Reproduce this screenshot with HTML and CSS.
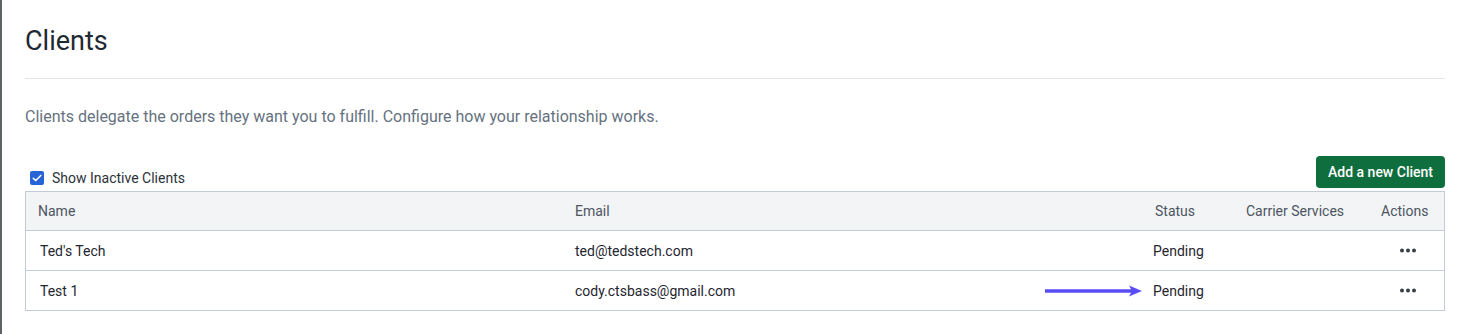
FILE: index.html
```html
<!DOCTYPE html>
<html>
<head>
<meta charset="utf-8">
<link rel="stylesheet" href="styles.css">
</head>
<body>
<div class="page">
  <h1 class="title">Clients</h1>
  <hr class="rule">
  <p class="desc">Clients delegate the orders they want you to fulfill. Configure how your relationship works.</p>
  <div class="toolbar">
    <label class="check">
      <span class="box"><svg width="10" height="8" viewBox="0 0 10 8"><path d="M1.2 4.2 L3.8 6.6 L8.8 1.4" fill="none" stroke="#fff" stroke-width="1.5" stroke-linecap="round" stroke-linejoin="round"/></svg></span>
      <span>Show Inactive Clients</span>
    </label>
    <button class="btn">Add a new Client</button>
  </div>
  <div class="table">
    <div class="row head">
      <div class="cell">Name</div>
      <div class="cell">Email</div>
      <div class="cell">Status</div>
      <div class="cell">Carrier Services</div>
      <div class="cell">Actions</div>
    </div>
    <div class="row">
      <div class="cell name">Ted's Tech</div>
      <div class="cell">ted@tedstech.com</div>
      <div class="cell status">Pending</div>
      <div class="cell"></div>
      <div class="cell actions"><svg width="18" height="5" viewBox="0 0 18 5"><circle cx="3" cy="2.5" r="2" fill="#3a3f46"/><circle cx="9" cy="2.5" r="2" fill="#3a3f46"/><circle cx="15" cy="2.5" r="2" fill="#3a3f46"/></svg></div>
    </div>
    <div class="row last">
      <div class="cell name">Test 1</div>
      <div class="cell">cody.ctsbass@gmail.com</div>
      <div class="cell status">Pending
        <svg class="arrow" width="100" height="12" viewBox="0 0 100 12"><path d="M0 6 H88" stroke="#5a4cf6" stroke-width="3.6"/><path d="M84 0.6 L97 6 L84 11.4 L87 6 Z" fill="#5a4cf6"/></svg>
      </div>
      <div class="cell"></div>
      <div class="cell actions"><svg width="18" height="5" viewBox="0 0 18 5"><circle cx="3" cy="2.5" r="2" fill="#3a3f46"/><circle cx="9" cy="2.5" r="2" fill="#3a3f46"/><circle cx="15" cy="2.5" r="2" fill="#3a3f46"/></svg></div>
    </div>
  </div>
</div>
</body>
</html>
```
FILE: styles.css
```css
html, body {
  margin: 0;
  padding: 0;
  background: #fff;
}
body {
  font-family: Roboto, "Liberation Sans", Arial, sans-serif;
  color: #1f2630;
  border-left: 2px solid #5f6368;
  min-height: 334px;
  box-sizing: border-box;
}
.page {
  padding: 23px 21px 0 23px;
}
.title {
  margin: 0;
  font-size: 27px;
  font-weight: 400;
  line-height: 36px;
  color: #1f2933;
}
.rule {
  border: 0;
  border-top: 1px solid #e2e4e7;
  margin: 19px 0 0 0;
}
.desc {
  margin: 27px 0 0 0;
  font-size: 16px;
  line-height: 22px;
  color: #66727f;
}
.toolbar {
  display: flex;
  justify-content: space-between;
  align-items: flex-end;
  margin-top: 28px;
  height: 35px;
}
.check {
  display: flex;
  align-items: center;
  gap: 8px;
  font-size: 14px;
  color: #2b323a;
  padding-left: 5px;
  margin-bottom: 4px;
  line-height: 18px;
}
.box {
  width: 14px;
  height: 14px;
  border-radius: 2px;
  background: #2563d6;
  display: flex;
  align-items: center;
  justify-content: center;
}
.btn {
  font-family: inherit;
  background: #0f6e3e;
  color: #fff;
  border: 0;
  border-radius: 4px;
  font-size: 14px;
  font-weight: 500;
  height: 32px;
  width: 129px;
  padding: 0;
  margin-bottom: 3px;
}
.table {
  border: 1px solid #c3ccd6;
}
.row {
  display: grid;
  grid-template-columns: 537px 580px 91px 135px 75px;
  height: 39px;
  border-bottom: 1px solid #c3ccd6;
  align-items: center;
  font-size: 14px;
}
.row.last {
  border-bottom: 0;
}
.row.head {
  background: #f3f4f6;
  color: #4c5561;
  height: 38px;
}
.cell {
  padding-left: 12px;
  white-space: nowrap;
  position: relative;
}
.cell.name {
  padding-left: 14px;
}
.cell.status {
  padding-left: 10px;
}
.cell.actions {
  padding-left: 3px;
  display: flex;
  justify-content: center;
}
.arrow {
  position: absolute;
  left: -98px;
  top: 50%;
  margin-top: -6px;
}
```
